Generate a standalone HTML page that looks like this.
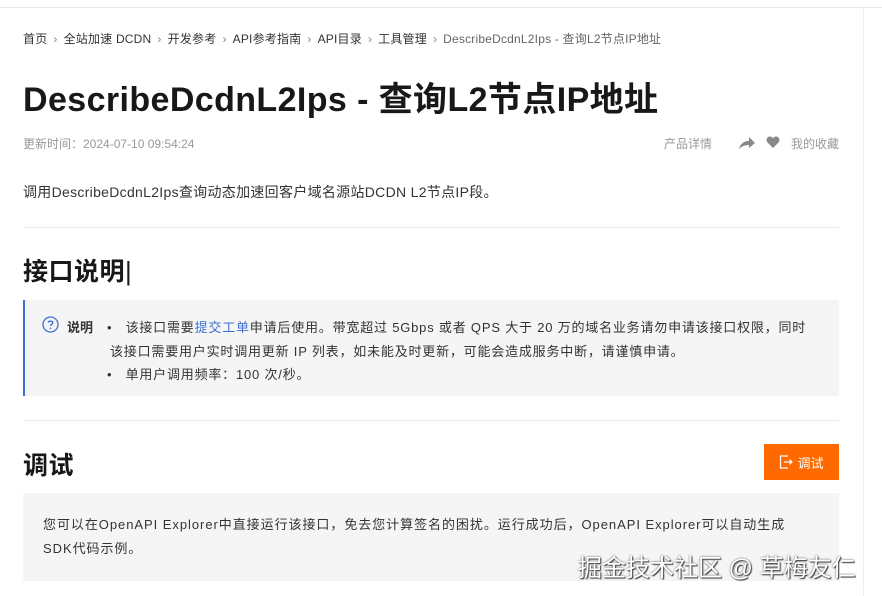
<!DOCTYPE html>
<html><head><meta charset="utf-8"><style>
*{margin:0;padding:0;box-sizing:border-box}
body{width:882px;height:596px;overflow:hidden;background:#fff;font-family:"Liberation Sans","Noto Sans CJK SC",sans-serif;color:#181818;position:relative}
.top{position:absolute;left:0;top:0;width:882px;height:8px;border-bottom:1px solid #e8e8e8}
.vr{position:absolute;left:863px;top:8px;width:1px;height:588px;background:#ececec}
.abs{position:absolute;white-space:nowrap}
.bc{left:23px;top:30px;font-size:12px;color:#333;letter-spacing:0.2px}
.bc .s{color:#888;margin:0 6px}
.bc .l{color:#666}
h1{position:absolute;left:23px;top:72px;font-size:34px;font-weight:bold;color:#181818;white-space:nowrap;letter-spacing:0.4px}
.meta{left:23px;top:135px;font-size:12px;color:#999}
.desc{left:23px;top:182px;font-size:14px;color:#333;letter-spacing:0.3px}
.hr{position:absolute;left:23px;width:816px;height:1px;background:#e8e8e8}
h2{position:absolute;left:23px;font-size:25px;font-weight:bold;color:#181818;letter-spacing:0.5px}
.note{position:absolute;left:23px;top:300px;width:816px;height:96px;background:#f5f5f5;border-left:2px solid #3d6fd6}
.note .t{font-size:13px;color:#333;position:absolute;white-space:nowrap;letter-spacing:0.8px}
.btn{position:absolute;left:764px;top:444px;width:75px;height:36px;background:#ff6a00;color:#fff;font-size:13px;display:flex;align-items:center;justify-content:center;gap:4px}
.box{position:absolute;left:23px;top:493px;width:816px;height:88px;background:#f5f5f5}
.box p{position:absolute;left:20px;top:20px;width:790px;font-size:13px;line-height:24px;color:#333;letter-spacing:0.95px;white-space:nowrap}
.wm{left:578px;top:548px;font-size:24px;color:#fff;text-shadow:0 0 2px #555,1px 1px 1px #333}
</style></head><body>
<div class="top"></div>
<div class="vr"></div>
<div class="abs bc">首页<span class="s">›</span>全站加速 DCDN<span class="s">›</span>开发参考<span class="s">›</span>API参考指南<span class="s">›</span>API目录<span class="s">›</span>工具管理<span class="s">›</span><span class="l">DescribeDcdnL2Ips - 查询L2节点IP地址</span></div>
<h1>DescribeDcdnL2Ips - 查询L2节点IP地址</h1>
<div class="abs meta">更新时间：2024-07-10 09:54:24</div>
<div class="abs meta" style="left:664px">产品详情</div>
<svg class="abs" style="left:738px;top:136px" width="18" height="14" viewBox="0 0 18 14"><path d="M1 13 C3 6 8 5 11 5 V1 L17 7 L11 12 V9 C7 9 4 10 1 13Z" fill="#888"/></svg>
<svg class="abs" style="left:766px;top:136px" width="14" height="13" viewBox="0 0 14 13"><path d="M7 12 L1.5 6.5 C-0.5 4 1 0.5 4 0.5 C5.5 0.5 6.5 1.5 7 2.5 C7.5 1.5 8.5 0.5 10 0.5 C13 0.5 14.5 4 12.5 6.5Z" fill="#888"/></svg>
<div class="abs meta" style="left:791px">我的收藏</div>
<div class="abs desc">调用DescribeDcdnL2Ips查询动态加速回客户域名源站DCDN L2节点IP段。</div>
<div class="hr" style="top:227px"></div>
<h2 style="top:252px">接口说明<span style="font-weight:normal;font-size:26px">|</span></h2>
<div class="note">
<svg style="position:absolute;left:17px;top:16px" width="17" height="17" viewBox="0 0 17 17"><circle cx="8.5" cy="8.5" r="7.5" fill="none" stroke="#3d6fd6" stroke-width="1.3"/><path d="M6.2 6.6 C6.2 4.8 10.8 4.6 10.8 6.8 C10.8 8.3 8.5 8.3 8.5 10" fill="none" stroke="#3d6fd6" stroke-width="1.3"/><circle cx="8.5" cy="12.3" r=".8" fill="#3d6fd6"/></svg>
<div class="t" style="left:42px;top:17px;font-weight:bold;letter-spacing:0">说明</div>
<div class="t" style="left:82px;top:17px">•&nbsp;&nbsp;&nbsp;该接口需要<span style="color:#3d6fd6">提交工单</span>申请后使用。带宽超过 5Gbps 或者 QPS 大于 20 万的域名业务请勿申请该接口权限，同时</div>
<div class="t" style="left:85px;top:41px">该接口需要用户实时调用更新 IP 列表，如未能及时更新，可能会造成服务中断，请谨慎申请。</div>
<div class="t" style="left:82px;top:64px">•&nbsp;&nbsp;&nbsp;单用户调用频率：100 次/秒。</div>
</div>
<div class="hr" style="top:420px"></div>
<h2 style="top:446px">调试</h2>
<div class="btn"><svg width="14" height="14" viewBox="0 0 14 14"><path d="M9 1H1.5V13H9M5 7H13M10.5 4.5L13 7L10.5 9.5" fill="none" stroke="#fff" stroke-width="1.2"/></svg>调试</div>
<div class="box"><p>您可以在OpenAPI Explorer中直接运行该接口，免去您计算签名的困扰。运行成功后，OpenAPI Explorer可以自动生成<br>SDK代码示例。</p></div>
<div class="abs wm">掘金技术社区 @ 草梅友仁</div>
</body></html>
